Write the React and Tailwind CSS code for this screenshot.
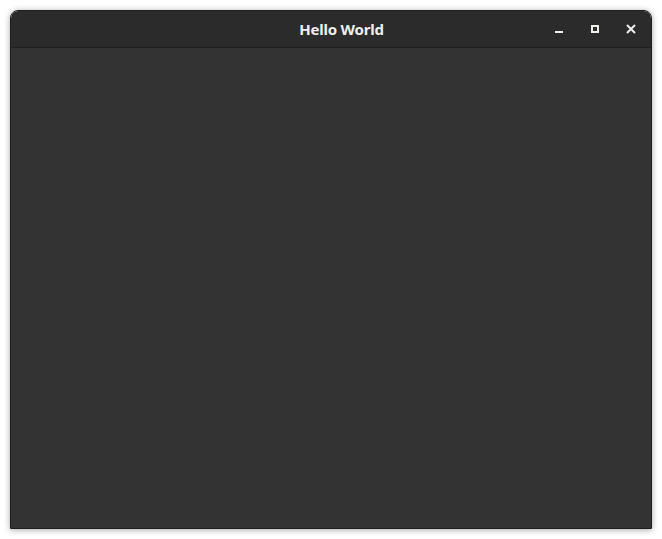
import React from 'react';

const App = () => {
    return (
        <div className="w-[662px] h-[539px] bg-white pt-[10px] px-[10px]" style={{ fontFamily: '"Noto Sans", sans-serif' }}>
            <div className="w-[642px] h-[519px] rounded-t-[8px] overflow-hidden flex flex-col shadow-[0_1px_6px_rgba(0,0,0,0.35)] border border-[#1e1e1e]">
                <div className="h-[37px] shrink-0 bg-[#2b2b2b] border-b border-[#1f1f1f] relative flex items-center justify-center">
                    <span className="ml-[21px] text-[15px] font-bold tracking-[-0.2px] text-[#eeeeec]">Hello World</span>
                    <div className="absolute right-0 top-0 h-full flex items-center">
                        <div className="w-[36px] h-full flex items-center justify-center">
                            <div className="w-[8px] h-[2px] bg-[#eeeeec] mt-[6px]" />
                        </div>
                        <div className="w-[36px] h-full flex items-center justify-center">
                            <div className="w-[8px] h-[8px] border-2 border-[#eeeeec]" />
                        </div>
                        <div className="w-[36px] h-full flex items-center justify-center mr-[2px]">
                            <svg width="10" height="10" viewBox="0 0 10 10">
                                <path d="M1 1 L9 9 M9 1 L1 9" stroke="#eeeeec" strokeWidth="2" />
                            </svg>
                        </div>
                    </div>
                </div>
                <div className="flex-1 bg-[#333333]" />
            </div>
        </div>
    );
};

export default App;
